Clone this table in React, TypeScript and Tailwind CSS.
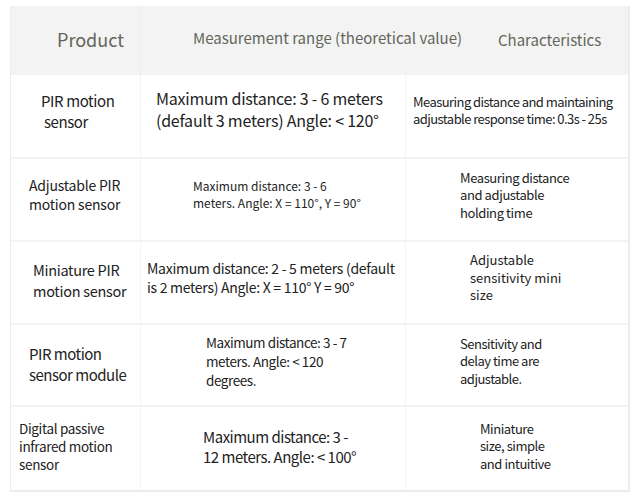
import type { ReactNode } from 'react';

type Cell = { lines: string[]; size: string; pad: string; lead: string; track: string };

const rows: { h: string; cells: Cell[] }[] = [
  {
    h: 'h-[82px]',
    cells: [
      { lines: ['PIR motion', '\u00a0sensor'], size: 'text-[15px]', pad: 'pl-[30px] pb-[10px]', lead: 'leading-[21px]', track: 'tracking-[-0.4px]' },
      { lines: ['Maximum distance: 3 - 6 meters', '(default 3 meters) Angle: < 120°'], size: 'text-[16px]', pad: 'pl-[15px] pb-[14px]', lead: 'leading-[22px]', track: 'tracking-[-0.23px]' },
      { lines: ['Measuring distance and maintaining', 'adjustable response time: 0.3s - 25s'], size: 'text-[13px]', pad: 'pl-[7px] pb-[12px]', lead: 'leading-[17px]', track: 'tracking-[-0.56px]' },
    ],
  },
  {
    h: 'h-[83px]',
    cells: [
      { lines: ['Adjustable PIR', 'motion sensor'], size: 'text-[14px]', pad: 'pl-[18px] pb-[10px]', lead: 'leading-[19px]', track: 'tracking-[-0.2px]' },
      { lines: ['Maximum distance: 3 - 6', 'meters. Angle: X = 110°, Y = 90°'], size: 'text-[12px]', pad: 'pl-[52px] pb-[12px]', lead: 'leading-[17px]', track: 'tracking-[0px]' },
      { lines: ['Measuring distance', 'and adjustable', 'holding time'], size: 'text-[13px]', pad: 'pl-[54px] pb-[9px]', lead: 'leading-[17.5px]', track: 'tracking-[-0.4px]' },
    ],
  },
  {
    h: 'h-[83px]',
    cells: [
      { lines: ['Miniature PIR', 'motion sensor'], size: 'text-[14.5px]', pad: 'pl-[22px] pb-[6px]', lead: 'leading-[21px]', track: 'tracking-[-0.3px]' },
      { lines: ['Maximum distance: 2 - 5 meters (default', 'is 2 meters) Angle: X = 110° Y = 90°'], size: 'text-[14px]', pad: 'pl-[6px] pb-[10px]', lead: 'leading-[19px]', track: 'tracking-[-0.28px]' },
      { lines: ['Adjustable', 'sensitivity mini', 'size'], size: 'text-[13px]', pad: 'pl-[64px] pb-[10px]', lead: 'leading-[17.5px]', track: 'tracking-[0px]' },
    ],
  },
  {
    h: 'h-[82px]',
    cells: [
      { lines: ['PIR motion', 'sensor module'], size: 'text-[15px]', pad: 'pl-[18px] pb-[2px]', lead: 'leading-[21px]', track: 'tracking-[-0.5px]' },
      { lines: ['Maximum distance: 3 - 7', 'meters. Angle: < 120', 'degrees.'], size: 'text-[13.5px]', pad: 'pl-[65px] pb-[8px]', lead: 'leading-[19px]', track: 'tracking-[-0.43px]' },
      { lines: ['Sensitivity and', 'delay time are', 'adjustable.'], size: 'text-[13px]', pad: 'pl-[54px] pb-[8px]', lead: 'leading-[17.5px]', track: 'tracking-[-0.5px]' },
    ],
  },
  {
    h: 'h-[85px]',
    cells: [
      { lines: ['Digital passive', 'infrared motion', 'sensor'], size: 'text-[13.5px]', pad: 'pl-[8px] pb-[6px]', lead: 'leading-[18px]', track: 'tracking-[-0.33px]' },
      { lines: ['Maximum distance: 3 -', '12 meters. Angle: < 100°'], size: 'text-[15px]', pad: 'pl-[62px] pb-[4px]', lead: 'leading-[20px]', track: 'tracking-[-0.5px]' },
      { lines: ['Miniature', 'size, simple', 'and intuitive'], size: 'text-[13px]', pad: 'pl-[74px] pb-[5px]', lead: 'leading-[17.5px]', track: 'tracking-[-0.46px]' },
    ],
  },
];

function Td({ cell, last, children }: { cell?: Cell; last?: boolean; children?: ReactNode }) {
  return (
    <div
      className={`flex flex-col justify-center whitespace-nowrap text-[#222] ${cell?.size} ${cell?.pad} ${cell?.lead} ${cell?.track} ${
        last ? '' : 'border-r border-[#f4f4f4]'
      }`}
    >
      {cell?.lines.map((l, i) => <span key={i}>{l}</span>)}
      {children}
    </div>
  );
}

export default function App() {
  return (
    <div
      className="w-[640px] h-[497px] bg-white pt-[6px] pl-[10px]"
      style={{ fontFamily: '"Noto Sans CJK SC", "Noto Sans", sans-serif' }}
    >
      <div className="w-[620px] border-r-2 border-b-2 border-l border-[#ececec]">
        <div className="grid grid-cols-[130px_265px_223px] h-[69px] bg-[#f3f3f3] text-[#62665a]">
          <div className="flex items-center pl-[46px] pb-[2px] text-[18px] border-r border-[#ececec]">Product</div>
          <div className="flex items-center pl-[52px] pb-[4px] text-[15px] whitespace-nowrap">Measurement range (theoretical value)</div>
          <div className="flex items-center pl-[92px] pb-[0px] text-[15px] whitespace-nowrap">Characteristics</div>
        </div>
        {rows.map((r, i) => (
          <div
            key={i}
            className={`grid grid-cols-[130px_265px_223px] ${r.h} ${i > 0 ? 'border-t-2 border-[#f3f3f3]' : ''}`}
          >
            <Td cell={r.cells[0]} />
            <Td cell={r.cells[1]} />
            <Td cell={r.cells[2]} last />
          </div>
        ))}
      </div>
    </div>
  );
}
